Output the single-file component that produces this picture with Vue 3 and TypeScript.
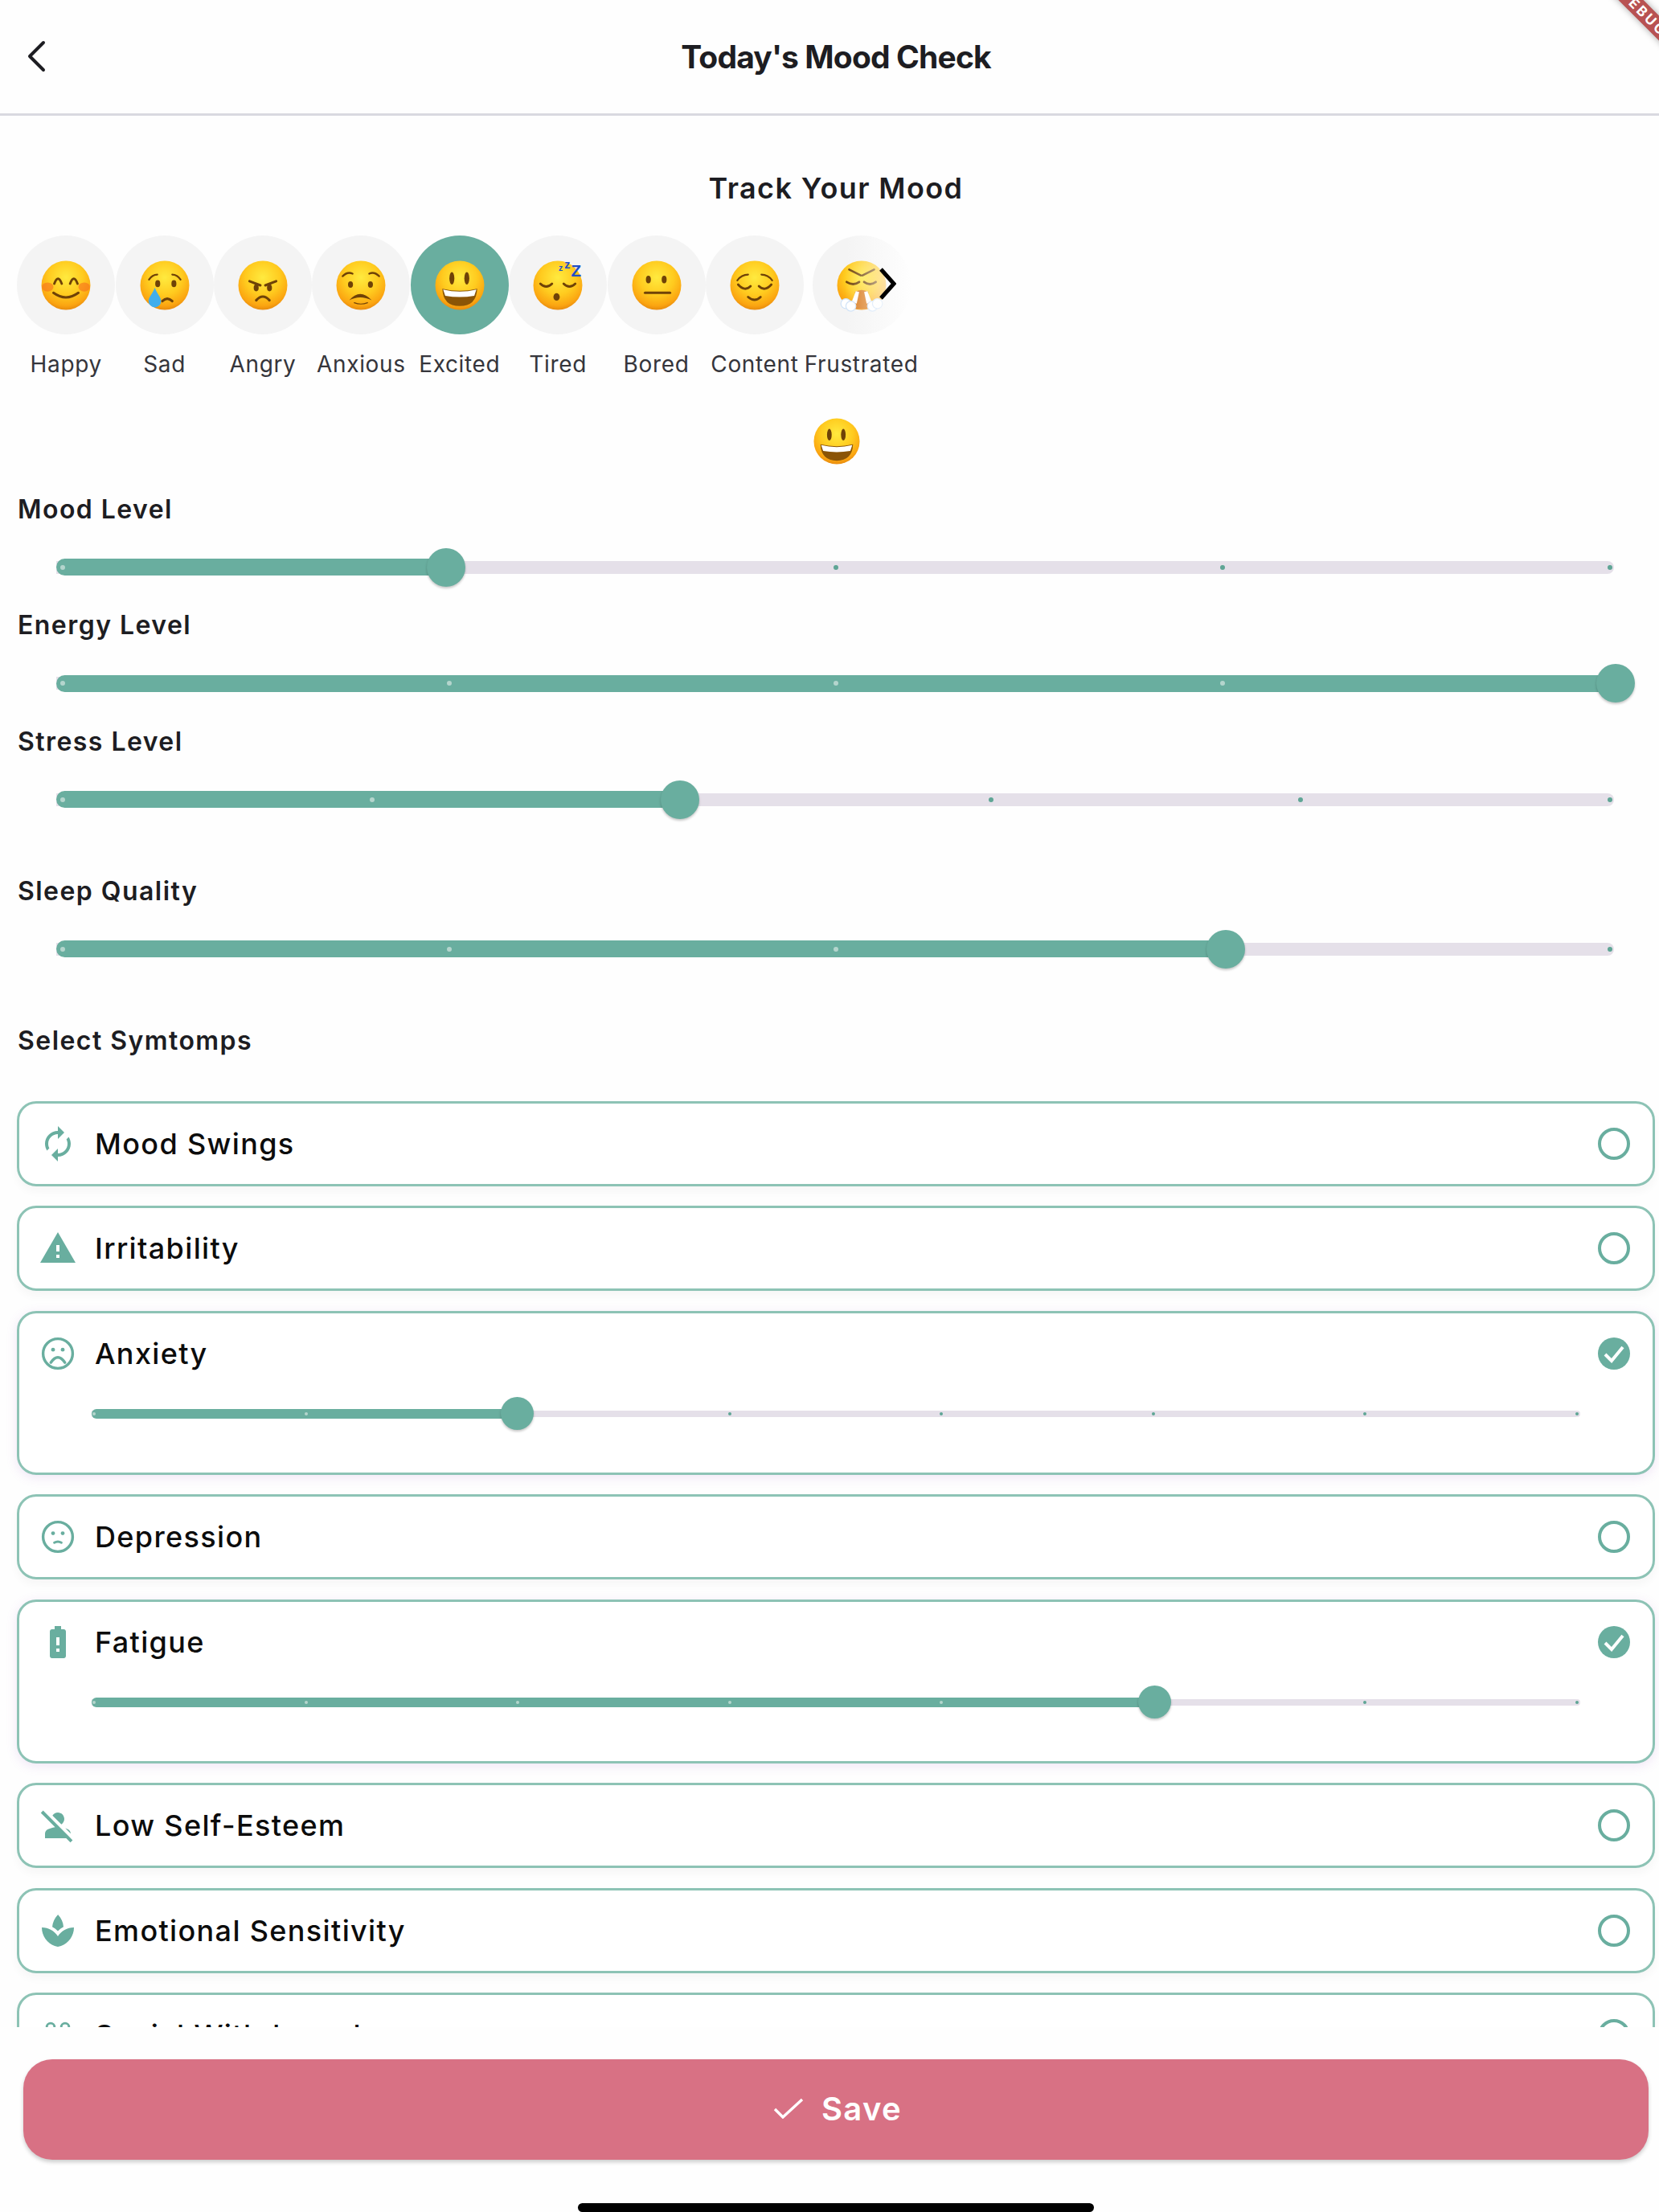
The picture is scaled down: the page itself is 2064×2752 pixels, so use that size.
<script setup lang="ts">
type Shape = { t: string; a: Record<string, string | number>; c?: string }

const BROWN = '#6f4207'
const eye = (cx: number, cy: number, rx = 2.9, ry = 3.9): Shape => ({ t: 'ellipse', a: { cx, cy, rx, ry, fill: BROWN } })
const line = (d: string, w = 2.8): Shape => ({ t: 'path', a: { d, fill: 'none', stroke: BROWN, 'stroke-width': w, 'stroke-linecap': 'round' } })
const fill = (d: string, color: string = BROWN): Shape => ({ t: 'path', a: { d, fill: color } })
const puff = (cx: number, cy: number, r: number): Shape => ({ t: 'circle', a: { cx, cy, r, fill: '#fff', stroke: '#cfe2f7', 'stroke-width': 1.2 } })
const zed = (x: number, y: number, size: number, c: string): Shape => ({
  t: 'text',
  c,
  a: { x, y, 'font-size': size, 'font-weight': 700, 'font-family': '"Liberation Sans", sans-serif', fill: '#1f4fc6' },
})

const excitedFace: Shape[] = [
  eye(20.5, 21.5, 3, 7.5),
  eye(38.5, 21.5, 3, 7.5),
  fill('M9 34 Q30 39 51 34 Q50 55 30 55 Q10 55 9 34 Z', '#8a5406'),
  fill('M10 35 Q30 40 50 35 L47.5 42.5 Q30 45.5 12.5 42.5 Z', '#ffffff'),
]

const moods: { name: string; selected?: boolean; fade?: boolean; wide?: boolean; face: Shape[] }[] = [
  {
    name: 'Happy',
    face: [
      { t: 'ellipse', a: { cx: 8, cy: 32, rx: 7, ry: 5.5, fill: '#f7701e', opacity: 0.6 } },
      { t: 'ellipse', a: { cx: 52, cy: 32, rx: 7, ry: 5.5, fill: '#f7701e', opacity: 0.6 } },
      line('M16 28 Q20.5 16 25 28'),
      line('M35 28 Q39.5 16 44 28'),
      line('M15 39 Q30 50 45 39', 3),
    ],
  },
  {
    name: 'Sad',
    face: [
      line('M11 23 Q15 17 21 17', 2.2),
      line('M39 17 Q45 17 49 23', 2.2),
      eye(21.5, 28, 3, 4.2),
      eye(41, 28, 3, 4.2),
      line('M27 49 Q33 43 39 49', 3),
      fill('M18 33 C15 41 10.5 44 10.5 49 A7.5 7.5 0 0 0 25.5 49 C25.5 44 21 41 18 33 Z', '#41aeec'),
    ],
  },
  {
    name: 'Angry',
    face: [
      line('M14 25 L27 30', 3),
      line('M46 25 L33 30', 3),
      eye(22, 33, 3, 4.2),
      eye(38, 33, 3, 4.2),
      line('M22 48 Q30 39 38 48', 3),
    ],
  },
  {
    name: 'Anxious',
    face: [
      line('M8 19 Q14 13 20 16', 2.2),
      line('M40 16 Q46 13 52 19', 2.2),
      eye(17.5, 29, 3, 3.8),
      eye(41.5, 29, 3, 3.8),
      fill('M16 48 Q29 33 43 48 Q29 41 16 48 Z'),
      line('M22 51 Q30 54 38 51', 1.2),
    ],
  },
  { name: 'Excited', selected: true, face: excitedFace },
  {
    name: 'Tired',
    face: [
      line('M9 28 Q16 35 23 28'),
      line('M37 28 Q44 35 51 28'),
      eye(28.5, 44, 3.8, 4.5),
      zed(31, 13, 10, 'z'),
      zed(38, 10, 14, 'z'),
      zed(46, 19, 20, 'Z'),
    ],
  },
  {
    name: 'Bored',
    face: [eye(20, 23, 3, 4.6), eye(39, 23, 3, 4.6), line('M16 39 L46 39', 3)],
  },
  {
    name: 'Content',
    face: [
      line('M9 24 Q14 17 22 17', 2.2),
      line('M38 17 Q46 17 51 24', 2.2),
      line('M10 29 Q18 38 25 31'),
      line('M35 31 Q42 38 50 29'),
      line('M22 44 Q30 51 37 44', 2.8),
    ],
  },
  {
    name: 'Frustrated',
    fade: true,
    wide: true,
    face: [
      line('M15 11 L29 18', 2.6),
      line('M45 11 L31 18', 2.6),
      line('M12 26 Q20 31 27 26'),
      line('M33 26 Q40 31 47 26'),
      fill('M22 58 L22 38 Q30 33 38 38 L38 58 Z', '#d9791a'),
      fill('M23 37 L18 50 L24 52 L27 38 Z', '#ffffff'),
      fill('M37 37 L42 50 L36 52 L33 38 Z', '#ffffff'),
      puff(11, 52, 6),
      puff(17, 55, 6),
      puff(43, 55, 6),
      puff(49, 52, 6),
    ],
  },
]

const sliders = [
  { label: 'Mood Level', value: 0.25, divisions: 4, extra: false },
  { label: 'Energy Level', value: 1, divisions: 4, extra: false },
  { label: 'Stress Level', value: 0.4, divisions: 5, extra: true },
  { label: 'Sleep Quality', value: 0.75, divisions: 4, extra: true },
]

const iconPaths: Record<string, Shape[]> = {
  sync: [
    fill(
      'M12 4V1L8 5l4 4V6c3.31 0 6 2.69 6 6 0 1.01-.25 1.97-.7 2.8l1.46 1.46C19.54 15.03 20 13.57 20 12c0-4.42-3.58-8-8-8zm0 14c-3.31 0-6-2.69-6-6 0-1.01.25-1.97.7-2.8L5.24 7.74C4.46 8.97 4 10.43 4 12c0 4.42 3.58 8 8 8v3l4-4-4-4v3z',
      '#69ae9f',
    ),
  ],
  warning: [fill('M1 21h22L12 2 1 21zm12-3h-2v-2h2v2zm0-4h-2v-4h2v4z', '#69ae9f')],
  veryBad: [
    { t: 'circle', a: { cx: 12, cy: 12, r: 9.2, fill: 'none', stroke: '#69ae9f', 'stroke-width': 1.7 } },
    { t: 'circle', a: { cx: 9, cy: 9.6, r: 1.2, fill: '#69ae9f' } },
    { t: 'circle', a: { cx: 15, cy: 9.6, r: 1.2, fill: '#69ae9f' } },
    { t: 'path', a: { d: 'M7.6 17.6 Q12 11.2 16.4 17.6', fill: 'none', stroke: '#69ae9f', 'stroke-width': 1.7, 'stroke-linecap': 'round' } },
  ],
  bad: [
    { t: 'circle', a: { cx: 12, cy: 12, r: 9.2, fill: 'none', stroke: '#69ae9f', 'stroke-width': 1.7 } },
    { t: 'circle', a: { cx: 9, cy: 9.8, r: 1.2, fill: '#69ae9f' } },
    { t: 'circle', a: { cx: 15, cy: 9.8, r: 1.2, fill: '#69ae9f' } },
    { t: 'path', a: { d: 'M9.8 15.6 Q12 14.3 14.2 15.6', fill: 'none', stroke: '#69ae9f', 'stroke-width': 1.5, 'stroke-linecap': 'round' } },
  ],
  battery: [
    fill(
      'M15.67 4H14V2h-4v2H8.33C7.6 4 7 4.6 7 5.33v15.33C7 21.4 7.6 22 8.33 22h7.33c.74 0 1.34-.6 1.34-1.33V5.33C17 4.6 16.4 4 15.67 4zM13 18h-2v-2h2v2zm0-4h-2V9h2v5z',
      '#69ae9f',
    ),
  ],
  personOff: [
    fill(
      'M8.65 5.82C9.36 4.72 10.6 4 12 4c2.21 0 4 1.79 4 4 0 1.4-.72 2.64-1.82 3.35L8.65 5.82zM20 17.17c-.02-1.1-.63-2.11-1.61-2.62-.54-.28-1.13-.54-1.77-.76L20 17.17zm1.19 4.02L2.81 2.81 1.39 4.22l8.89 8.89c-1.81.23-3.39.79-4.67 1.45C4.61 15.07 4 16.1 4 17.22V20h13.17l2.61 2.61 1.41-1.42z',
      '#69ae9f',
    ),
  ],
  spa: [
    fill(
      'M15.49 9.63c-.18-2.79-1.31-5.51-3.43-7.63-2.14 2.14-3.32 4.86-3.55 7.63 1.28.68 2.46 1.56 3.49 2.63 1.03-1.06 2.21-1.94 3.49-2.63zM12 15.45C9.85 12.17 6.18 10 2 10c0 5.32 3.36 9.82 8.03 11.49.63.23 1.29.4 1.97.51.68-.12 1.33-.29 1.97-.51C18.64 19.82 22 15.32 22 10c-4.18 0-7.85 2.17-10 5.45z',
      '#69ae9f',
    ),
  ],
  social: [
    { t: 'circle', a: { cx: 7.5, cy: 7, r: 2.4, fill: 'none', stroke: '#69ae9f', 'stroke-width': 1.4 } },
    { t: 'circle', a: { cx: 16.5, cy: 7, r: 2.4, fill: 'none', stroke: '#69ae9f', 'stroke-width': 1.4 } },
  ],
}

const symptoms: { name: string; icon: string; value?: number; mirror?: boolean }[] = [
  { name: 'Mood Swings', icon: 'sync', mirror: true },
  { name: 'Irritability', icon: 'warning' },
  { name: 'Anxiety', icon: 'veryBad', value: 2 / 7 },
  { name: 'Depression', icon: 'bad' },
  { name: 'Fatigue', icon: 'battery', value: 5 / 7 },
  { name: 'Low Self-Esteem', icon: 'personOff' },
  { name: 'Emotional Sensitivity', icon: 'spa' },
  { name: 'Social Withdrawal', icon: 'social' },
]

const pct = (v: number): string => `${v * 100}%`
const ticks = (n: number): number[] => Array.from({ length: n + 1 }, (_, i) => i / n)
// Tick marks sit slightly inside the track ends, like the Material slider's.
const bigTick = (f: number): string => `${8 + 1924.5 * f}px`
const smallTick = (f: number): string => `${3 + 1845 * f}px`
// The thumb travels a little past the track's right end on the large sliders.
const bigThumb = (v: number): string => `${1940 * v}px`
</script>

<template>
  <div class="page">
    <svg class="defs" width="0" height="0" aria-hidden="true">
      <defs>
        <radialGradient id="faceGrad" cx="0.5" cy="0.34" r="0.7">
          <stop offset="0" stop-color="#ffea3f" />
          <stop offset="0.5" stop-color="#ffcb1f" />
          <stop offset="0.82" stop-color="#fba511" />
          <stop offset="1" stop-color="#df7f0c" />
        </radialGradient>
      </defs>
    </svg>

    <header class="header">
      <svg class="back" viewBox="0 0 24 40" width="24" height="40">
        <path d="M21 3 L4 20 L21 37" fill="none" stroke="#1d1d22" stroke-width="4" stroke-linecap="round" stroke-linejoin="round" />
      </svg>
      <h1 class="title">Today's Mood Check</h1>
    </header>

    <main class="scroll">
      <h2 class="track-title">Track Your Mood</h2>

      <div class="mood-row">
        <div v-for="m in moods" :key="m.name" class="mood" :class="{ wide: m.wide }">
          <div class="circle" :class="{ selected: m.selected, fade: m.fade }">
            <svg class="emoji" viewBox="0 0 60 60">
              <circle cx="30" cy="30" r="29.5" fill="url(#faceGrad)" />
              <template v-for="(s, i) in m.face" :key="i">
                <text v-if="s.t === 'text'" v-bind="s.a">{{ s.c }}</text>
                <component :is="s.t" v-else v-bind="s.a" />
              </template>
            </svg>
            <svg v-if="m.fade" class="chevron" viewBox="0 0 22 40">
              <path d="M3 2 L19 20 L3 38" fill="none" stroke="#000" stroke-width="5" />
            </svg>
          </div>
          <span class="mood-name">{{ m.name }}</span>
        </div>
      </div>

      <div class="current">
        <svg class="emoji" viewBox="0 0 60 60">
          <circle cx="30" cy="30" r="29.5" fill="url(#faceGrad)" />
          <component :is="s.t" v-for="(s, i) in excitedFace" :key="i" v-bind="s.a" />
        </svg>
      </div>

      <section v-for="s in sliders" :key="s.label" class="level" :class="{ extra: s.extra }">
        <div class="label">{{ s.label }}</div>
        <div class="slider big">
          <div class="bar-off"></div>
          <div class="bar-on" :style="{ width: pct(s.value) }"></div>
          <i
            v-for="f in ticks(s.divisions)"
            :key="f"
            class="tick"
            :class="{ on: f <= s.value }"
            :style="{ left: bigTick(f) }"
          ></i>
          <div class="thumb" :style="{ left: bigThumb(s.value) }"></div>
        </div>
      </section>

      <div class="label symptoms-label">Select Symtomps</div>

      <div class="cards">
        <article v-for="c in symptoms" :key="c.name" class="card" :class="{ open: c.value !== undefined }">
          <div class="card-head">
            <svg class="icon" :class="{ mirror: c.mirror }" viewBox="0 0 24 24">
              <component :is="s.t" v-for="(s, i) in iconPaths[c.icon]" :key="i" v-bind="s.a" />
            </svg>
            <span class="card-name">{{ c.name }}</span>
            <svg class="radio" viewBox="0 0 40 40">
              <template v-if="c.value !== undefined">
                <circle cx="20" cy="20" r="20" fill="#69ae9f" />
                <path d="M9 21 L17 29 L31 12" fill="none" stroke="#fff" stroke-width="4" />
              </template>
              <circle v-else cx="20" cy="20" r="18" fill="none" stroke="#69ae9f" stroke-width="4" />
            </svg>
          </div>
          <div v-if="c.value !== undefined" class="slider small">
            <div class="bar-off"></div>
            <div class="bar-on" :style="{ width: pct(c.value) }"></div>
            <i
              v-for="f in ticks(7)"
              :key="f"
              class="tick"
              :class="{ on: f <= c.value }"
              :style="{ left: smallTick(f) }"
            ></i>
            <div class="thumb" :style="{ left: pct(c.value) }"></div>
          </div>
        </article>
      </div>
    </main>

    <button class="save" type="button">
      <svg class="save-check" viewBox="0 0 38 26">
        <path d="M2 14 L12 24 L36 2" fill="none" stroke="#fff" stroke-width="3.4" />
      </svg>
      <span>Save</span>
    </button>

    <div class="home"></div>
    <div class="banner">DEBUG</div>
  </div>
</template>

<style>
html,
body {
  margin: 0;
  background: #fff;
}
</style>

<style scoped>
.page {
  position: relative;
  width: 2064px;
  height: 2752px;
  overflow: hidden;
  background: #fefefe;
  font-family: Inter, "Noto Sans", sans-serif;
  color: #1d1d22;
}
.defs {
  display: block;
  height: 0;
}
.header {
  height: 141px;
  border-bottom: 3px solid #d9d9e0;
  display: flex;
  align-items: center;
  justify-content: center;
  position: relative;
  padding-left: 16px;
}
.back {
  position: absolute;
  left: 33px;
  top: 50px;
}
.title {
  margin: 0;
  font-size: 39px;
  font-weight: 700;
  letter-spacing: -0.85px;
  line-height: 48px;
}
.scroll {
  height: 2378px;
  overflow: hidden;
  padding: 0 5px 0 21px;
  box-sizing: border-box;
}
.track-title {
  margin: 68px 0 0;
  text-align: center;
  font-size: 36px;
  font-weight: 600;
  line-height: 44px;
  letter-spacing: 1.4px;
}
.mood-row {
  display: flex;
  margin-top: 37px;
}
.mood {
  flex: none;
  width: 122.4px;
  display: flex;
  flex-direction: column;
  align-items: center;
}
.mood.wide {
  width: 143px;
}
.circle {
  position: relative;
  width: 122px;
  height: 123px;
  border-radius: 50%;
  background: #f4f4f4;
  display: flex;
  align-items: center;
  justify-content: center;
}
.circle.selected {
  background: #69ae9f;
}
.circle.fade::after {
  content: "";
  position: absolute;
  top: 0;
  bottom: 0;
  left: 40px;
  right: -2px;
  background: linear-gradient(to right, rgba(254, 254, 254, 0), #fefefe);
}
.chevron {
  position: absolute;
  z-index: 1;
  left: 82px;
  top: 40px;
  width: 22px;
  height: 40px;
}
.emoji {
  width: 62px;
  height: 62px;
  overflow: visible;
}
.mood-name {
  margin-top: 19px;
  font-size: 28px;
  line-height: 36px;
  letter-spacing: 0.65px;
  white-space: nowrap;
  color: #35353b;
}
.current {
  display: flex;
  justify-content: center;
  height: 60px;
  align-items: center;
  margin-top: 48px;
  margin-bottom: 34.5px;
  padding-left: 2px;
}
.current .emoji {
  width: 58px;
  height: 58px;
}
.label {
  font-size: 32px;
  font-weight: 600;
  line-height: 40px;
  letter-spacing: 1.45px;
  padding-left: 1px;
}
.level {
  height: 144.5px;
}
.level.extra {
  height: 186px;
}
.slider {
  position: relative;
  display: flex;
  align-items: center;
}
.slider.big {
  margin-top: 28px;
  margin-left: 49px;
  width: 1938px;
  height: 48px;
  --on: 21px;
  --off: 16px;
  --thumb: 48px;
  --tick: 6px;
}
.slider.small {
  margin-top: 4px;
  margin-left: 90px;
  width: 1852px;
  height: 42px;
  --on: 12px;
  --off: 8px;
  --thumb: 41px;
  --tick: 4px;
}
.bar-off {
  width: 100%;
  height: var(--off);
  background: #e5e0e9;
  border-radius: 0 8px 8px 0;
}
.bar-on {
  position: absolute;
  left: 0;
  height: var(--on);
  background: #69ae9f;
  border-radius: 11px;
}
.tick {
  position: absolute;
  top: 50%;
  width: var(--tick);
  height: var(--tick);
  margin: calc(var(--tick) / -2) 0 0 calc(var(--tick) / -2);
  border-radius: 50%;
  background: #5fa595;
}
.tick.on {
  background: #b4d5cd;
}
.thumb {
  position: absolute;
  top: 50%;
  width: var(--thumb);
  height: var(--thumb);
  margin: calc(var(--thumb) / -2) 0 0 calc(var(--thumb) / -2);
  border-radius: 50%;
  background: #69ae9f;
  box-shadow: 0 2px 3px rgba(0, 0, 0, 0.22);
}
.cards {
  margin-top: 55px;
  display: flex;
  flex-direction: column;
  gap: 24.5px;
  width: 2038px;
}
.card {
  box-sizing: border-box;
  flex: none;
  height: 106px;
  border: 3px solid #8dc3b5;
  border-radius: 24px;
  background: #fff;
  box-shadow: 0 6px 12px rgba(0, 0, 0, 0.035);
}
.card.open {
  height: 204px;
  box-shadow: 0 3px 14px rgba(170, 100, 205, 0.16);
}
.card-head {
  height: 100px;
  display: flex;
  align-items: center;
  padding: 0 28px 0 24px;
}
.icon {
  flex: none;
  width: 48px;
  height: 48px;
}
.icon.mirror {
  transform: scaleX(-1);
}
.card-name {
  margin-left: 22px;
  flex: 1;
  font-size: 36px;
  font-weight: 500;
  letter-spacing: 1.35px;
  color: #0c0c0c;
}
.radio {
  flex: none;
  width: 40px;
  height: 40px;
}
.save {
  display: flex;
  align-items: center;
  justify-content: center;
  gap: 22px;
  width: 2022px;
  height: 125px;
  margin: 40px 0 0 29px;
  padding: 0 0 3px 4px;
  border: 0;
  border-radius: 36px;
  background: #d87184;
  color: #fff;
  font-family: inherit;
  font-size: 40px;
  font-weight: 600;
  letter-spacing: 1.3px;
  box-shadow: 0 3px 5px rgba(0, 0, 0, 0.2);
}
.save-check {
  width: 38px;
  height: 26px;
}
.home {
  position: absolute;
  left: 719px;
  bottom: 0;
  width: 642px;
  height: 11px;
  border-radius: 6px;
  background: #000;
}
.banner {
  position: absolute;
  left: 1955px;
  top: 5px;
  width: 180px;
  height: 22px;
  line-height: 22px;
  transform: rotate(45deg);
  background: #b85252;
  color: #fff;
  font-size: 17px;
  font-weight: 700;
  letter-spacing: 3px;
  text-align: center;
  box-shadow: 0 0 8px rgba(0, 0, 0, 0.35);
}
</style>
